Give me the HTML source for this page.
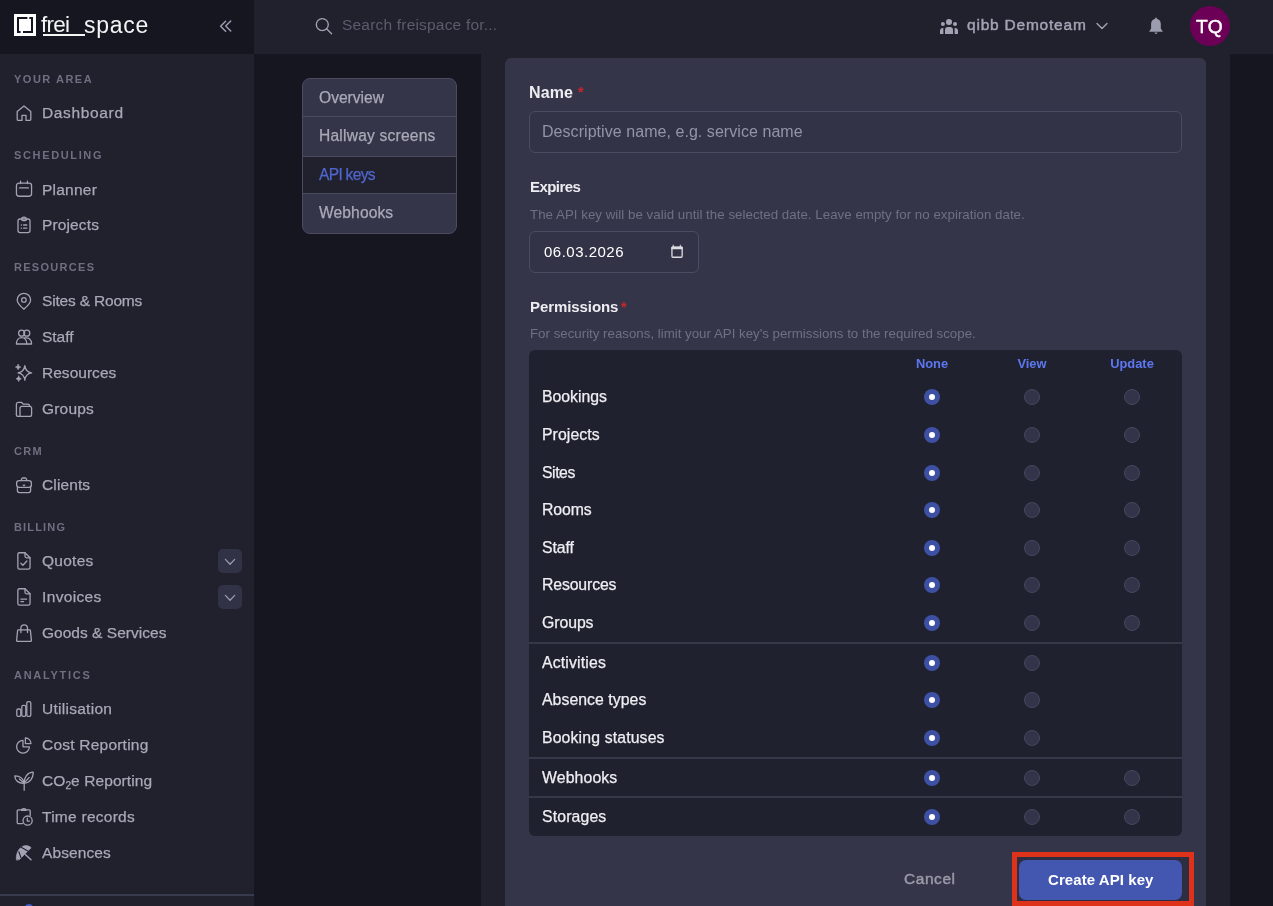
<!DOCTYPE html>
<html><head><meta charset="utf-8"><title>freispace</title>
<style>
*{box-sizing:border-box;margin:0;padding:0}
html,body{width:1273px;height:906px;overflow:hidden;background:#161621;font-family:"Liberation Sans",sans-serif}
.a{position:absolute;display:block}
.t{position:absolute;white-space:nowrap;will-change:transform}
.r{position:absolute;border-radius:50%}
</style></head><body>
<div class="a" style="left:0;top:0;width:254px;height:906px;background:#20212d"></div>
<div class="a" style="left:0;top:0;width:254px;height:54px;background:#161621"></div>
<div class="a" style="left:254px;top:0;width:1019px;height:54px;background:#20212d"></div>
<div class="a" style="left:481px;top:54px;width:749px;height:852px;background:#20212d"></div>
<div class="a" style="left:505px;top:58px;width:701px;height:900px;background:#353549;border-radius:6px"></div>
<svg class="a" style="left:14px;top:14px" width="22" height="22" viewBox="0 0 22 22" fill="none" stroke="#a2a3b3" stroke-width="1.3" stroke-linecap="round" stroke-linejoin="round"><rect x="0" y="0" width="22" height="22" fill="#fff" stroke="none"/><rect x="3" y="3" width="16" height="16" fill="#161621" stroke="none"/><rect x="5" y="5" width="12" height="12" fill="#fff" stroke="none"/><rect x="13.4" y="3" width="1.9" height="2" fill="#fff" stroke="none"/><rect x="6.6" y="17" width="2.4" height="2.4" fill="#fff" stroke="none"/></svg>
<div class="t" style="left:40.5px;top:10.40px;font-size:22.5px;line-height:30px;color:#f4f4f6;font-weight:400;letter-spacing:-0.767px;">frei</div>
<div class="t" style="left:84.3px;top:10.01px;font-size:23px;line-height:30px;color:#f4f4f6;font-weight:400;letter-spacing:0.720px;">space</div>
<div class="a" style="left:43px;top:34px;width:42px;height:2px;background:#f4f4f6"></div>
<svg class="a" style="left:216px;top:18px" width="20" height="16" viewBox="0 0 20 16" fill="none" stroke="#9a9cb0" stroke-width="1.5" stroke-linecap="round" stroke-linejoin="round"><path d="M9.6 3.2 L4.6 8.2 L9.6 13.2"/><path d="M14.7 3 L9.7 8 L14.7 13"/></svg>
<div class="t" style="left:14px;top:72.10px;font-size:11px;line-height:14px;color:#6e6f80;font-weight:700;letter-spacing:1.507px;">YOUR AREA</div>
<div class="t" style="left:14px;top:147.80px;font-size:11px;line-height:14px;color:#6e6f80;font-weight:700;letter-spacing:1.643px;">SCHEDULING</div>
<div class="t" style="left:14px;top:259.90px;font-size:11px;line-height:14px;color:#6e6f80;font-weight:700;letter-spacing:1.288px;">RESOURCES</div>
<div class="t" style="left:14px;top:443.90px;font-size:11px;line-height:14px;color:#6e6f80;font-weight:700;letter-spacing:1.350px;">CRM</div>
<div class="t" style="left:14px;top:519.90px;font-size:11px;line-height:14px;color:#6e6f80;font-weight:700;letter-spacing:1.164px;">BILLING</div>
<div class="t" style="left:14px;top:667.90px;font-size:11px;line-height:14px;color:#6e6f80;font-weight:700;letter-spacing:1.725px;">ANALYTICS</div>
<svg class="a" style="left:14px;top:103px" width="20" height="20" viewBox="0 0 20 20" fill="none" stroke="#a2a3b3" stroke-width="1.3" stroke-linecap="round" stroke-linejoin="round"><path d="M3.2 8.6 L10 3 L16.8 8.6 V16.2 a1.2 1.2 0 0 1 -1.2 1.2 H12 V12.4 H8 V17.4 H4.4 a1.2 1.2 0 0 1 -1.2 -1.2 Z"/></svg>
<div class="t" style="left:42px;top:103.28px;font-size:15.5px;line-height:20px;color:#a8a9b8;font-weight:400;letter-spacing:0.650px;-webkit-text-stroke:0.25px #a8a9b8">Dashboard</div>
<svg class="a" style="left:14px;top:179px" width="20" height="20" viewBox="0 0 20 20" fill="none" stroke="#a2a3b3" stroke-width="1.3" stroke-linecap="round" stroke-linejoin="round"><rect x="2.45" y="4.15" width="15.1" height="13.1" rx="2.4"/><path d="M5.6 8.9 H14.4" stroke-width="1.4"/><path d="M6.6 2.2 V4.6 M13.4 2.2 V4.6"/></svg>
<div class="t" style="left:42px;top:179.58px;font-size:15.5px;line-height:20px;color:#a8a9b8;font-weight:400;letter-spacing:0.235px;-webkit-text-stroke:0.25px #a8a9b8">Planner</div>
<svg class="a" style="left:14px;top:215px" width="20" height="20" viewBox="0 0 20 20" fill="none" stroke="#a2a3b3" stroke-width="1.3" stroke-linecap="round" stroke-linejoin="round"><rect x="4" y="4" width="12" height="13.6" rx="2"/><path d="M7.6 4.4 C7.6 2.9 8.7 2.2 10 2.2 C11.3 2.2 12.4 2.9 12.4 4.4 C12.4 5.2 11.4 5.6 10 5.6 C8.6 5.6 7.6 5.2 7.6 4.4 Z"/><path d="M7.3 10 H7.5 M9.6 10 H12.8 M7.3 13.2 H7.5 M9.6 13.2 H12.8"/></svg>
<div class="t" style="left:42px;top:215.28px;font-size:15.5px;line-height:20px;color:#a8a9b8;font-weight:400;letter-spacing:0.133px;-webkit-text-stroke:0.25px #a8a9b8">Projects</div>
<svg class="a" style="left:14px;top:291px" width="20" height="20" viewBox="0 0 20 20" fill="none" stroke="#a2a3b3" stroke-width="1.3" stroke-linecap="round" stroke-linejoin="round"><path d="M9.9 18.2 C7.2 15.8 3.2 12.6 3.2 9 A6.7 6.7 0 0 1 16.6 9 C16.6 12.6 12.6 15.8 9.9 18.2 Z"/><circle cx="9.9" cy="8.9" r="2.3"/></svg>
<div class="t" style="left:42px;top:291.08px;font-size:15.5px;line-height:20px;color:#a8a9b8;font-weight:400;letter-spacing:-0.182px;-webkit-text-stroke:0.25px #a8a9b8">Sites &amp; Rooms</div>
<svg class="a" style="left:14px;top:327px" width="20" height="20" viewBox="0 0 20 20" fill="none" stroke="#a2a3b3" stroke-width="1.3" stroke-linecap="round" stroke-linejoin="round"><circle cx="7.6" cy="6.2" r="3"/><circle cx="12.8" cy="6.2" r="3"/><path d="M2.4 17 C2.4 12.6 5 10.6 7.6 10.6 C10.2 10.6 12.8 12.6 12.8 17 Z"/><path d="M10.6 11 C14.6 10.2 17.6 12.4 17.6 17 H12.8"/></svg>
<div class="t" style="left:42px;top:327.08px;font-size:15.5px;line-height:20px;color:#a8a9b8;font-weight:400;letter-spacing:-0.025px;-webkit-text-stroke:0.25px #a8a9b8">Staff</div>
<svg class="a" style="left:14px;top:363px" width="20" height="20" viewBox="0 0 20 20" fill="none" stroke="#a2a3b3" stroke-width="1.3" stroke-linecap="round" stroke-linejoin="round"><path d="M10.8 2.6 Q11.6 9.1 17.6 9.9 Q11.6 10.7 10.8 17.2 Q10 10.7 4 9.9 Q10 9.1 10.8 2.6 Z"/><path d="M4.1 1.4 Q4.5 3.7 6.8 4.1 Q4.5 4.5 4.1 6.8 Q3.7 4.5 1.4 4.1 Q3.7 3.7 4.1 1.4 Z" fill="#a2a3b3" stroke-width="0.6"/><path d="M4.7 13.1 Q5.1 15.4 7.4 15.8 Q5.1 16.2 4.7 18.5 Q4.3 16.2 2 15.8 Q4.3 15.4 4.7 13.1 Z" fill="#a2a3b3" stroke-width="0.6"/></svg>
<div class="t" style="left:42px;top:363.08px;font-size:15.5px;line-height:20px;color:#a8a9b8;font-weight:400;letter-spacing:0.025px;-webkit-text-stroke:0.25px #a8a9b8">Resources</div>
<svg class="a" style="left:14px;top:399px" width="20" height="20" viewBox="0 0 20 20" fill="none" stroke="#a2a3b3" stroke-width="1.3" stroke-linecap="round" stroke-linejoin="round"><path d="M2.4 15.4 V5.2 a1.9 1.9 0 0 1 1.9 -1.9 H7.4 L9.4 5.2 H13.8 a1.9 1.9 0 0 1 1.9 1.9 V7.4"/><path d="M2.4 15.4 a1.9 1.9 0 0 0 1.9 1.9 H15.7 a1.9 1.9 0 0 0 1.9 -1.9 V9.3 a1.9 1.9 0 0 0 -1.9 -1.9 H7.9 a1.9 1.9 0 0 0 -1.9 1.9 V17.3"/></svg>
<div class="t" style="left:42px;top:399.08px;font-size:15.5px;line-height:20px;color:#a8a9b8;font-weight:400;letter-spacing:0.180px;-webkit-text-stroke:0.25px #a8a9b8">Groups</div>
<svg class="a" style="left:14px;top:475px" width="20" height="20" viewBox="0 0 20 20" fill="none" stroke="#a2a3b3" stroke-width="1.3" stroke-linecap="round" stroke-linejoin="round"><rect x="2.6" y="5.6" width="14.8" height="6.8" rx="2.6"/><path d="M3.4 11.4 V15.6 a2 2 0 0 0 2 2 H14.6 a2 2 0 0 0 2 -2 V11.4"/><path d="M7 5.6 L7.9 3.6 a1 1 0 0 1 0.9 -0.6 H11.2 a1 1 0 0 1 0.9 0.6 L13 5.6"/><path d="M9.5 10.3 H10.5" stroke-width="1.6"/></svg>
<div class="t" style="left:42px;top:475.08px;font-size:15.5px;line-height:20px;color:#a8a9b8;font-weight:400;letter-spacing:0.120px;-webkit-text-stroke:0.25px #a8a9b8">Clients</div>
<svg class="a" style="left:14px;top:551px" width="20" height="20" viewBox="0 0 20 20" fill="none" stroke="#a2a3b3" stroke-width="1.3" stroke-linecap="round" stroke-linejoin="round"><path d="M5.45 1.75 H11 L16.05 6.8 V16.45 a1.6 1.6 0 0 1 -1.6 1.6 H5.45 a1.6 1.6 0 0 1 -1.6 -1.6 V3.35 a1.6 1.6 0 0 1 1.6 -1.6 Z"/><path d="M11 1.75 V5.3 a1.5 1.5 0 0 0 1.5 1.5 H16.05"/><path d="M6.9 12.3 L8.9 14.3 L12.9 10"/></svg>
<div class="t" style="left:42px;top:551.08px;font-size:15.5px;line-height:20px;color:#a8a9b8;font-weight:400;letter-spacing:0.260px;-webkit-text-stroke:0.25px #a8a9b8">Quotes</div>
<svg class="a" style="left:14px;top:587px" width="20" height="20" viewBox="0 0 20 20" fill="none" stroke="#a2a3b3" stroke-width="1.3" stroke-linecap="round" stroke-linejoin="round"><path d="M5.45 1.75 H11 L16.05 6.8 V16.45 a1.6 1.6 0 0 1 -1.6 1.6 H5.45 a1.6 1.6 0 0 1 -1.6 -1.6 V3.35 a1.6 1.6 0 0 1 1.6 -1.6 Z"/><path d="M11 1.75 V5.3 a1.5 1.5 0 0 0 1.5 1.5 H16.05"/><path d="M6.9 12.2 H12.6 M6.9 14.6 H9.6"/></svg>
<div class="t" style="left:42px;top:587.08px;font-size:15.5px;line-height:20px;color:#a8a9b8;font-weight:400;letter-spacing:0.353px;-webkit-text-stroke:0.25px #a8a9b8">Invoices</div>
<svg class="a" style="left:14px;top:623px" width="20" height="20" viewBox="0 0 20 20" fill="none" stroke="#a2a3b3" stroke-width="1.3" stroke-linecap="round" stroke-linejoin="round"><path d="M4.4 6.9 H15.6 a0.8 0.8 0 0 1 0.8 0.7 L17.4 17.2 a1 1 0 0 1 -1 1.1 H3.6 a1 1 0 0 1 -1 -1.1 L3.6 7.6 a0.8 0.8 0 0 1 0.8 -0.7 Z"/><path d="M6.9 9.6 V5.2 a3.3 3.3 0 0 1 6.6 0 V9.6"/></svg>
<div class="t" style="left:42px;top:623.08px;font-size:15.5px;line-height:20px;color:#a8a9b8;font-weight:400;letter-spacing:0.024px;-webkit-text-stroke:0.25px #a8a9b8">Goods &amp; Services</div>
<svg class="a" style="left:14px;top:699px" width="20" height="20" viewBox="0 0 20 20" fill="none" stroke="#a2a3b3" stroke-width="1.3" stroke-linecap="round" stroke-linejoin="round"><rect x="2.8" y="10" width="4" height="7.4" rx="1.4"/><rect x="7.8" y="6.4" width="4" height="11" rx="1.4"/><rect x="12.8" y="2.6" width="4" height="14.8" rx="1.4"/></svg>
<div class="t" style="left:42px;top:699.08px;font-size:15.5px;line-height:20px;color:#a8a9b8;font-weight:400;letter-spacing:0.270px;-webkit-text-stroke:0.25px #a8a9b8">Utilisation</div>
<svg class="a" style="left:14px;top:735px" width="20" height="20" viewBox="0 0 20 20" fill="none" stroke="#a2a3b3" stroke-width="1.3" stroke-linecap="round" stroke-linejoin="round"><path d="M9 5.4 A6.4 6.4 0 1 0 15.4 11.8 H9 Z"/><path d="M11.4 3 A5.6 5.6 0 0 1 17 8.6 H11.4 Z"/></svg>
<div class="t" style="left:42px;top:735.08px;font-size:15.5px;line-height:20px;color:#a8a9b8;font-weight:400;letter-spacing:0.221px;-webkit-text-stroke:0.25px #a8a9b8">Cost Reporting</div>
<svg class="a" style="left:14px;top:771px" width="20" height="20" viewBox="0 0 20 20" fill="none" stroke="#a2a3b3" stroke-width="1.3" stroke-linecap="round" stroke-linejoin="round"><path d="M10.2 12.2 V19.2"/><path d="M10.2 12.2 C10 6.4 13.4 1.4 19.2 1.2 C19.4 7.2 15.8 11.8 10.2 12.2 Z"/><path d="M10.2 12.2 C9.6 8.2 6.4 4.8 0.8 4.8 C0.8 9.4 4.4 12.6 10.2 12.2 Z"/><path d="M10.6 11.6 L15.2 6.4 M9.8 11.8 L5.4 8"/></svg>
<div class="t" style="left:42px;top:771.08px;font-size:15.5px;line-height:20px;color:#a8a9b8;font-weight:400;letter-spacing:0.089px;-webkit-text-stroke:0.25px #a8a9b8">CO<span style='font-size:10px;vertical-align:-3px'>2</span>e Reporting</div>
<svg class="a" style="left:14px;top:807px" width="20" height="20" viewBox="0 0 20 20" fill="none" stroke="#a2a3b3" stroke-width="1.3" stroke-linecap="round" stroke-linejoin="round"><path d="M8.4 16.6 H4.3 a1.1 1.1 0 0 1 -1.1 -1.1 V3.9 a1.1 1.1 0 0 1 1.1 -1.1 H15.1 a1.1 1.1 0 0 1 1.1 1.1 V8.4"/><path d="M7.6 3.4 C7.6 2.2 8.6 1.7 9.8 1.7 C11 1.7 12 2.2 12 3.4 Z"/><circle cx="13.6" cy="13.6" r="4.6"/><path d="M13.3 11.2 V14.1 H15.5"/></svg>
<div class="t" style="left:42px;top:807.08px;font-size:15.5px;line-height:20px;color:#a8a9b8;font-weight:400;letter-spacing:0.258px;-webkit-text-stroke:0.25px #a8a9b8">Time records</div>
<svg class="a" style="left:14px;top:843px" width="20" height="20" viewBox="0 0 20 20" fill="none" stroke="#a2a3b3" stroke-width="1.3" stroke-linecap="round" stroke-linejoin="round"><path d="M2.4 16.8 C1.8 12.6 3.4 7.6 6.8 4.6 C10.2 1.8 14.2 1.8 17.2 4.8 L13.4 8.4 L9.8 12.2 L5.6 16.4 Z" fill="#a2a3b3" stroke-width="0.6"/><path d="M11.6 11.8 L17 16.8" stroke-width="1.5"/><path d="M4.9 8.8 L6.9 14.6" stroke="#20212d" stroke-width="1.1"/><path d="M7.2 4.2 L13.8 8" stroke="#20212d" stroke-width="1.1"/></svg>
<div class="t" style="left:42px;top:843.08px;font-size:15.5px;line-height:20px;color:#a8a9b8;font-weight:400;letter-spacing:0.111px;-webkit-text-stroke:0.25px #a8a9b8">Absences</div>
<div class="a" style="left:218px;top:549px;width:24px;height:24px;border-radius:5px;background:#313245"></div>
<svg class="a" style="left:218px;top:549px" width="24" height="24" viewBox="0 0 24 24" fill="none" stroke="#9a9cae" stroke-width="1.3" stroke-linecap="round" stroke-linejoin="round"><path d="M7.4 10.4 L12.05 15.2 L16.7 10.4"/></svg>
<div class="a" style="left:218px;top:585px;width:24px;height:24px;border-radius:5px;background:#313245"></div>
<svg class="a" style="left:218px;top:585px" width="24" height="24" viewBox="0 0 24 24" fill="none" stroke="#9a9cae" stroke-width="1.3" stroke-linecap="round" stroke-linejoin="round"><path d="M7.4 10.4 L12.05 15.2 L16.7 10.4"/></svg>
<div class="a" style="left:0;top:894px;width:254px;height:2px;background:#383a4e"></div>
<div class="r" style="left:25px;top:904px;width:8px;height:8px;background:#4258c4"></div>
<svg class="a" style="left:314px;top:16px" width="20" height="20" viewBox="0 0 20 20" fill="none" stroke="#a2a3b3" stroke-width="1.35" stroke-linecap="round" stroke-linejoin="round"><circle cx="8.3" cy="8.6" r="6"/><path d="M12.8 13.1 L17.6 17.8"/></svg>
<div class="t" style="left:342px;top:15.28px;font-size:15.5px;line-height:20px;color:#5b5c6c;font-weight:400;letter-spacing:0.195px;">Search freispace for...</div>
<svg class="a" style="left:939px;top:18px" width="20" height="16" viewBox="0 0 20 16" fill="#a2a3b3" stroke="none" stroke-width="0" stroke-linecap="round" stroke-linejoin="round"><circle cx="10" cy="4" r="3.05"/><circle cx="3.9" cy="6" r="2"/><circle cx="16" cy="6" r="2"/><path d="M6 16 V12 a3 3 0 0 1 3 -3 H11 a3 3 0 0 1 3 3 V16 Z"/><path d="M1 16 V13 a3 3 0 0 1 3 -3 H4.4 V16 Z"/><path d="M19 16 V13 a3 3 0 0 0 -3 -3 H15.6 V16 Z"/></svg>
<div class="t" style="left:967px;top:15.38px;font-size:15.5px;line-height:20px;color:#a3a4b4;font-weight:400;letter-spacing:0.783px;-webkit-text-stroke:0.45px #a3a4b4">qibb Demoteam</div>
<svg class="a" style="left:1095px;top:20px" width="14" height="12" viewBox="0 0 14 12" fill="none" stroke="#a2a3b3" stroke-width="1.4" stroke-linecap="round" stroke-linejoin="round"><path d="M2 3.4 L7 8.4 L12 3.4"/></svg>
<svg class="a" style="left:1148px;top:16px" width="16" height="20" viewBox="0 0 16 20" fill="#9b9cad" stroke="none" stroke-width="0" stroke-linecap="round" stroke-linejoin="round"><path d="M8 1.6 C8.6 1.6 8.9 2.2 8.9 2.8 C11.3 3.3 12.8 5.4 12.8 8 V12.4 L14.9 15.8 H1.1 L3.1 12.4 V8 C3.1 5.4 4.7 3.3 7.1 2.8 C7.1 2.2 7.4 1.6 8 1.6 Z"/><path d="M6.5 16.6 H9.6 C9.4 17.4 8.8 18 8 18 C7.2 18 6.7 17.4 6.5 16.6 Z"/></svg>
<div class="r" style="left:1190px;top:6px;width:40px;height:40px;background:#6c0057"></div>
<div class="t" style="left:1196.2px;top:16.55px;font-size:19.2px;line-height:20px;color:#ffffff;font-weight:400;letter-spacing:0.000px;-webkit-text-stroke:0.5px #fff">TQ</div>
<div class="a" style="left:302px;top:78px;width:155px;height:156px;border:1px solid #4a4b5f;border-radius:8px;background:#353549;overflow:hidden"><div class="a" style="left:0;top:77px;width:153px;height:38px;background:#20212d"></div><div class="a" style="left:0;top:37px;width:153px;height:1px;background:#4a4b5f"></div><div class="a" style="left:0;top:77px;width:153px;height:1px;background:#4a4b5f"></div><div class="a" style="left:0;top:114px;width:153px;height:1px;background:#4a4b5f"></div></div>
<div class="t" style="left:319.4px;top:88.28px;font-size:15.6px;line-height:20px;color:#a9aab8;font-weight:400;letter-spacing:0.001px;-webkit-text-stroke:0.25px #a9aab8">Overview</div>
<div class="t" style="left:319.4px;top:126.48px;font-size:15.6px;line-height:20px;color:#a9aab8;font-weight:400;letter-spacing:0.202px;-webkit-text-stroke:0.25px #a9aab8">Hallway screens</div>
<div class="t" style="left:319.4px;top:165.28px;font-size:15.6px;line-height:20px;color:#5066cc;font-weight:400;letter-spacing:-0.713px;-webkit-text-stroke:0.25px #5066cc">API keys</div>
<div class="t" style="left:319.4px;top:203.08px;font-size:15.6px;line-height:20px;color:#a9aab8;font-weight:400;letter-spacing:0.111px;-webkit-text-stroke:0.25px #a9aab8">Webhooks</div>
<div class="t" style="left:529.3px;top:82.89px;font-size:16px;line-height:20px;color:#ececf1;font-weight:700;letter-spacing:0.100px;">Name</div>
<div class="t" style="left:578px;top:82.06px;font-size:14.5px;line-height:20px;color:#c9262d;font-weight:700;letter-spacing:0.000px;">*</div>
<div class="a" style="left:529px;top:111px;width:653px;height:42px;border:1px solid #4b4c61;border-radius:6px;background:#333347"></div>
<div class="t" style="left:542.4px;top:122.29px;font-size:16px;line-height:20px;color:#9395a7;font-weight:400;letter-spacing:0.054px;">Descriptive name, e.g. service name</div>
<div class="t" style="left:529.5px;top:177.27px;font-size:15px;line-height:20px;color:#ececf1;font-weight:700;letter-spacing:-0.549px;">Expires</div>
<div class="t" style="left:529.5px;top:204.74px;font-size:13.3px;line-height:20px;color:#6f7083;font-weight:400;letter-spacing:0.029px;">The API key will be valid until the selected date. Leave empty for no expiration date.</div>
<div class="a" style="left:529px;top:231px;width:170px;height:41.5px;border:1px solid #4b4c61;border-radius:6px;background:#333347"></div>
<div class="t" style="left:543.6px;top:241.77px;font-size:15px;line-height:20px;color:#ffffff;font-weight:400;letter-spacing:0.491px;">06.03.2026</div>
<svg class="a" style="left:670px;top:244px" width="14" height="14" viewBox="0 0 14 14" fill="none" stroke="#dcdce3" stroke-width="1.3" stroke-linecap="round" stroke-linejoin="round"><rect x="1.95" y="3.2" width="10.2" height="10.05" rx="1"/><rect x="1.3" y="2.7" width="11.5" height="2.6" rx="0.6" fill="#dcdce3" stroke="none"/><path d="M3.4 1.2 L3.9 2.9 H2.9 Z M10.6 1.2 L11.1 2.9 H10.1 Z" fill="#dcdce3" stroke-width="0.6"/></svg>
<div class="t" style="left:529.5px;top:296.97px;font-size:15px;line-height:20px;color:#ececf1;font-weight:700;letter-spacing:-0.080px;">Permissions</div>
<div class="t" style="left:621px;top:297.06px;font-size:14.5px;line-height:20px;color:#c9262d;font-weight:700;letter-spacing:0.000px;">*</div>
<div class="t" style="left:529.5px;top:324.04px;font-size:13.3px;line-height:20px;color:#6f7083;font-weight:400;letter-spacing:-0.003px;">For security reasons, limit your API key's permissions to the required scope.</div>
<div class="a" style="left:529px;top:350px;width:653px;height:486px;background:#363749;border-radius:6px"></div>
<div class="a" style="left:529px;top:350px;width:653px;height:292px;background:#20212e;border-radius:6px 6px 0px 0px"></div>
<div class="a" style="left:529px;top:644px;width:653px;height:113px;background:#20212e;border-radius:0px 0px 0px 0px"></div>
<div class="a" style="left:529px;top:759px;width:653px;height:37px;background:#20212e;border-radius:0px 0px 0px 0px"></div>
<div class="a" style="left:529px;top:798px;width:653px;height:38px;background:#20212e;border-radius:0px 0px 6px 6px"></div>
<div class="t" style="left:882px;width:100px;text-align:center;top:354.20px;font-size:12.9px;line-height:20px;color:#5d77f0;font-weight:700">None</div>
<div class="t" style="left:982px;width:100px;text-align:center;top:354.20px;font-size:12.9px;line-height:20px;color:#5d77f0;font-weight:700">View</div>
<div class="t" style="left:1082px;width:100px;text-align:center;top:354.20px;font-size:12.9px;line-height:20px;color:#5d77f0;font-weight:700">Update</div>
<div class="t" style="left:541.5px;top:386.88px;font-size:15.8px;line-height:20px;color:#eeeef3;font-weight:400;letter-spacing:0.000px;-webkit-text-stroke:0.25px #eeeef3">Bookings</div>
<div class="r" style="left:924px;top:388.8px;width:16px;height:16px;background:#3d50a4"></div>
<div class="r" style="left:929px;top:393.8px;width:6px;height:6px;background:#ffffff"></div>
<div class="r" style="left:1024px;top:388.8px;width:16px;height:16px;background:#33344a;border:1px solid #46475c"></div>
<div class="r" style="left:1124px;top:388.8px;width:16px;height:16px;background:#33344a;border:1px solid #46475c"></div>
<div class="t" style="left:541.5px;top:424.78px;font-size:15.8px;line-height:20px;color:#eeeef3;font-weight:400;letter-spacing:0.088px;-webkit-text-stroke:0.25px #eeeef3">Projects</div>
<div class="r" style="left:924px;top:426.7px;width:16px;height:16px;background:#3d50a4"></div>
<div class="r" style="left:929px;top:431.7px;width:6px;height:6px;background:#ffffff"></div>
<div class="r" style="left:1024px;top:426.7px;width:16px;height:16px;background:#33344a;border:1px solid #46475c"></div>
<div class="r" style="left:1124px;top:426.7px;width:16px;height:16px;background:#33344a;border:1px solid #46475c"></div>
<div class="t" style="left:541.5px;top:462.98px;font-size:15.8px;line-height:20px;color:#eeeef3;font-weight:400;letter-spacing:-0.450px;-webkit-text-stroke:0.25px #eeeef3">Sites</div>
<div class="r" style="left:924px;top:464.9px;width:16px;height:16px;background:#3d50a4"></div>
<div class="r" style="left:929px;top:469.9px;width:6px;height:6px;background:#ffffff"></div>
<div class="r" style="left:1024px;top:464.9px;width:16px;height:16px;background:#33344a;border:1px solid #46475c"></div>
<div class="r" style="left:1124px;top:464.9px;width:16px;height:16px;background:#33344a;border:1px solid #46475c"></div>
<div class="t" style="left:541.5px;top:500.38px;font-size:15.8px;line-height:20px;color:#eeeef3;font-weight:400;letter-spacing:-0.075px;-webkit-text-stroke:0.25px #eeeef3">Rooms</div>
<div class="r" style="left:924px;top:502.3px;width:16px;height:16px;background:#3d50a4"></div>
<div class="r" style="left:929px;top:507.3px;width:6px;height:6px;background:#ffffff"></div>
<div class="r" style="left:1024px;top:502.3px;width:16px;height:16px;background:#33344a;border:1px solid #46475c"></div>
<div class="r" style="left:1124px;top:502.3px;width:16px;height:16px;background:#33344a;border:1px solid #46475c"></div>
<div class="t" style="left:541.5px;top:537.78px;font-size:15.8px;line-height:20px;color:#eeeef3;font-weight:400;letter-spacing:-0.100px;-webkit-text-stroke:0.25px #eeeef3">Staff</div>
<div class="r" style="left:924px;top:539.7px;width:16px;height:16px;background:#3d50a4"></div>
<div class="r" style="left:929px;top:544.7px;width:6px;height:6px;background:#ffffff"></div>
<div class="r" style="left:1024px;top:539.7px;width:16px;height:16px;background:#33344a;border:1px solid #46475c"></div>
<div class="r" style="left:1124px;top:539.7px;width:16px;height:16px;background:#33344a;border:1px solid #46475c"></div>
<div class="t" style="left:541.5px;top:575.08px;font-size:15.8px;line-height:20px;color:#eeeef3;font-weight:400;letter-spacing:-0.132px;-webkit-text-stroke:0.25px #eeeef3">Resources</div>
<div class="r" style="left:924px;top:577.0px;width:16px;height:16px;background:#3d50a4"></div>
<div class="r" style="left:929px;top:582.0px;width:6px;height:6px;background:#ffffff"></div>
<div class="r" style="left:1024px;top:577.0px;width:16px;height:16px;background:#33344a;border:1px solid #46475c"></div>
<div class="r" style="left:1124px;top:577.0px;width:16px;height:16px;background:#33344a;border:1px solid #46475c"></div>
<div class="t" style="left:541.5px;top:613.18px;font-size:15.8px;line-height:20px;color:#eeeef3;font-weight:400;letter-spacing:-0.060px;-webkit-text-stroke:0.25px #eeeef3">Groups</div>
<div class="r" style="left:924px;top:615.1px;width:16px;height:16px;background:#3d50a4"></div>
<div class="r" style="left:929px;top:620.1px;width:6px;height:6px;background:#ffffff"></div>
<div class="r" style="left:1024px;top:615.1px;width:16px;height:16px;background:#33344a;border:1px solid #46475c"></div>
<div class="r" style="left:1124px;top:615.1px;width:16px;height:16px;background:#33344a;border:1px solid #46475c"></div>
<div class="t" style="left:541.5px;top:652.98px;font-size:15.8px;line-height:20px;color:#eeeef3;font-weight:400;letter-spacing:0.168px;-webkit-text-stroke:0.25px #eeeef3">Activities</div>
<div class="r" style="left:924px;top:654.9px;width:16px;height:16px;background:#3d50a4"></div>
<div class="r" style="left:929px;top:659.9px;width:6px;height:6px;background:#ffffff"></div>
<div class="r" style="left:1024px;top:654.9px;width:16px;height:16px;background:#33344a;border:1px solid #46475c"></div>
<div class="t" style="left:541.5px;top:690.08px;font-size:15.8px;line-height:20px;color:#eeeef3;font-weight:400;letter-spacing:0.057px;-webkit-text-stroke:0.25px #eeeef3">Absence types</div>
<div class="r" style="left:924px;top:692.0px;width:16px;height:16px;background:#3d50a4"></div>
<div class="r" style="left:929px;top:697.0px;width:6px;height:6px;background:#ffffff"></div>
<div class="r" style="left:1024px;top:692.0px;width:16px;height:16px;background:#33344a;border:1px solid #46475c"></div>
<div class="t" style="left:541.5px;top:728.08px;font-size:15.8px;line-height:20px;color:#eeeef3;font-weight:400;letter-spacing:0.144px;-webkit-text-stroke:0.25px #eeeef3">Booking statuses</div>
<div class="r" style="left:924px;top:730.0px;width:16px;height:16px;background:#3d50a4"></div>
<div class="r" style="left:929px;top:735.0px;width:6px;height:6px;background:#ffffff"></div>
<div class="r" style="left:1024px;top:730.0px;width:16px;height:16px;background:#33344a;border:1px solid #46475c"></div>
<div class="t" style="left:541.5px;top:767.88px;font-size:15.8px;line-height:20px;color:#eeeef3;font-weight:400;letter-spacing:0.132px;-webkit-text-stroke:0.25px #eeeef3">Webhooks</div>
<div class="r" style="left:924px;top:769.8px;width:16px;height:16px;background:#3d50a4"></div>
<div class="r" style="left:929px;top:774.8px;width:6px;height:6px;background:#ffffff"></div>
<div class="r" style="left:1024px;top:769.8px;width:16px;height:16px;background:#33344a;border:1px solid #46475c"></div>
<div class="r" style="left:1124px;top:769.8px;width:16px;height:16px;background:#33344a;border:1px solid #46475c"></div>
<div class="t" style="left:541.5px;top:806.78px;font-size:15.8px;line-height:20px;color:#eeeef3;font-weight:400;letter-spacing:0.143px;-webkit-text-stroke:0.25px #eeeef3">Storages</div>
<div class="r" style="left:924px;top:808.7px;width:16px;height:16px;background:#3d50a4"></div>
<div class="r" style="left:929px;top:813.7px;width:6px;height:6px;background:#ffffff"></div>
<div class="r" style="left:1024px;top:808.7px;width:16px;height:16px;background:#33344a;border:1px solid #46475c"></div>
<div class="r" style="left:1124px;top:808.7px;width:16px;height:16px;background:#33344a;border:1px solid #46475c"></div>
<div class="t" style="left:903.8px;top:869.28px;font-size:15.5px;line-height:20px;color:#9a9aa9;font-weight:400;letter-spacing:0.560px;-webkit-text-stroke:0.45px #9a9aa9">Cancel</div>
<div class="a" style="left:1012px;top:852px;width:182px;height:54px;border:5px solid #df321b;background:#2d2e41"></div>
<div class="a" style="left:1019px;top:860px;width:163px;height:40px;border-radius:7px;background:#4357b0"></div>
<div class="t" style="left:1047.9px;top:870.07px;font-size:15px;line-height:20px;color:#ffffff;font-weight:700;letter-spacing:0.072px;">Create API key</div>
</body></html>
